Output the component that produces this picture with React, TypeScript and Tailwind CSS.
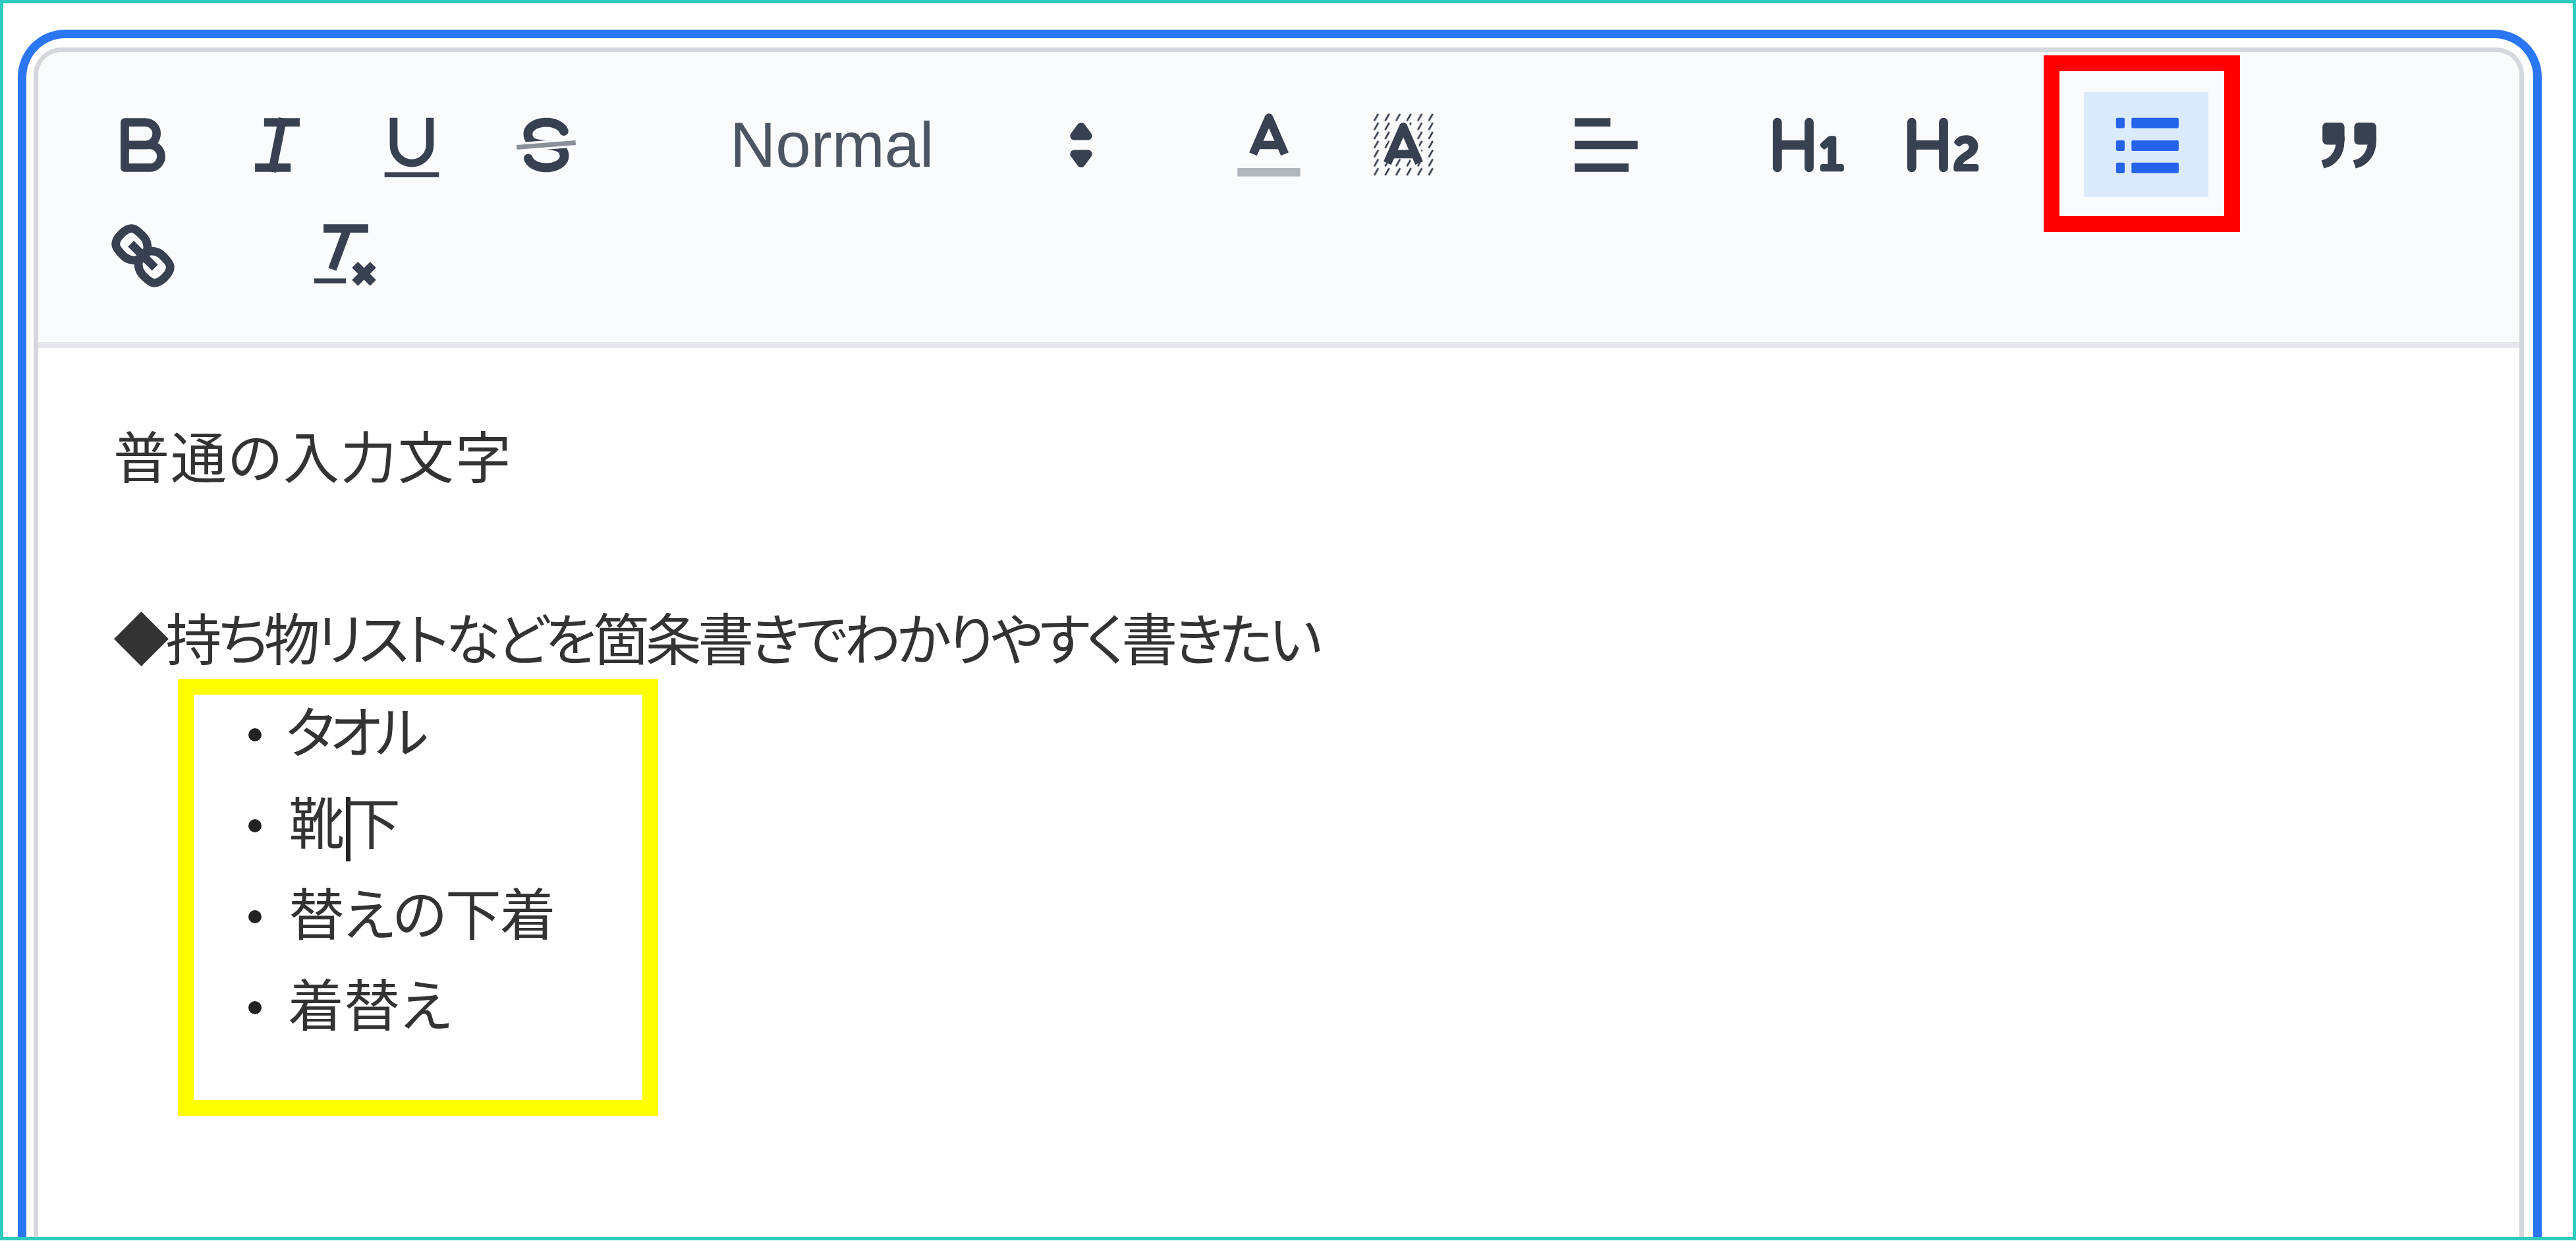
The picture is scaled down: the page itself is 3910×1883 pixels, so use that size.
import React from "react";

function Svg({ children, className = "" }: { children: React.ReactNode; className?: string }) {
  return (
    <svg
      viewBox="0 0 18 18"
      className={"w-[124px] h-[124px] fill-none stroke-current stroke-[1.85] [stroke-linecap:square] [stroke-linejoin:round] " + className}
    >
      {children}
    </svg>
  );
}

function Btn({ children, active = false }: { children: React.ReactNode; active?: boolean }) {
  return (
    <button
      className={
        "w-[189px] h-[159px] flex items-center justify-center " +
        (active ? "bg-[#dbeafe] text-[#2563eb]" : "text-[#374151]")
      }
    >
      {children}
    </button>
  );
}

function Group({ children }: { children: React.ReactNode }) {
  return <div className="flex gap-[15px]">{children}</div>;
}

const items = [
  { t: "タオル", c: "tracking-[-8px] -ml-[4px]" },
  { t: "靴下", c: "" },
  { t: "替えの下着", c: "tracking-[-2px]" },
  { t: "着替え", c: "-ml-[1px]" },
];

export default function App() {
  return (
    <div className="relative w-[3910px] h-[1882px] bg-white border-[5px] border-[#2ecbbd] overflow-hidden flex flex-col pl-[22px] pr-[47px] pt-[40px] [font-family:'Noto_Sans_CJK_JP',sans-serif]">
      <div className="flex-1 flex flex-col rounded-t-[72px] border-[13px] border-b-0 border-[#2b76f5] pl-[11px] pr-[14px] pt-[14px] bg-white min-h-0">
        <div className="flex-1 flex flex-col rounded-t-[42px] border-[7px] border-b-0 border-[#d4d7dc] overflow-hidden min-h-0">
          <div className="flex flex-wrap gap-x-[119px] gap-y-[9px] pl-[64px] pr-[20px] pt-[61px] pb-[52px] bg-[#fafbfd] border-b-[9px] border-[#e5e7eb]">
            <Group>
              <Btn>
                <Svg>
                  <path d="M5,4H9.5A2.5,2.5,0,0,1,12,6.5v0A2.5,2.5,0,0,1,9.5,9H5A0,0,0,0,1,5,9V4A0,0,0,0,1,5,4Z" />
                  <path d="M5,9h5.5A2.5,2.5,0,0,1,13,11.5v0A2.5,2.5,0,0,1,10.5,14H5a0,0,0,0,1,0,0V9A0,0,0,0,1,5,9Z" />
                </Svg>
              </Btn>
              <Btn>
                <Svg>
                  <line x1="7" x2="13" y1="4" y2="4" />
                  <line x1="5" x2="11" y1="14" y2="14" />
                  <line x1="8" x2="10" y1="14" y2="4" />
                </Svg>
              </Btn>
              <Btn>
                <Svg>
                  <path d="M5,3V9a4.012,4.012,0,0,0,4,4H9a4.012,4.012,0,0,0,4-4V3" className="[stroke-linecap:butt] stroke-[1.7]" />
                  <rect height="1.1" width="12" x="3" y="15" className="fill-current stroke-0" />
                </Svg>
              </Btn>
              <Btn>
                <Svg>
                  <path className="fill-current stroke-0" d="M9.007,8C6.542,7.791,6,7.519,6,6.5,6,5.792,7.283,5,9,5c1.571,0,2.765.679,2.969,1.309a1,1,0,0,0,1.9-.617C13.356,4.106,11.354,3,9,3,6.2,3,4,4.538,4,6.5a3.2,3.2,0,0,0,.5,1.843Z" />
                  <path className="fill-current stroke-0" d="M8.984,10C11.457,10.208,12,10.479,12,11.5c0,.708-1.283,1.5-3,1.5-1.571,0-2.765-.679-2.969-1.309a1,1,0,1,0-1.9.617C4.644,13.894,6.646,15,9,15c2.8,0,5-1.538,5-3.5a3.2,3.2,0,0,0-.5-1.843Z" />
                  <line x1="15.5" x2="2.5" y1="8.5" y2="9.5" className="stroke-[#8a9099] stroke-1 [stroke-linecap:butt]" />
                </Svg>
              </Btn>
            </Group>

            <div className="w-[670px] h-[159px] flex items-center justify-between pl-[66px] pr-[9px] text-[#4b5563]">
              <span className="text-[96px] leading-none [font-family:'Liberation_Sans',Arial,sans-serif]">Normal</span>
              <Svg className="text-[#374151]">
                <polygon points="7.5 11 9 13 10.5 11 7.5 11" className="fill-current" />
                <polygon points="7.5 7 9 5 10.5 7 7.5 7" className="fill-current" />
              </Svg>
            </div>

            <Group>
              <Btn>
                <Svg>
                  <line x1="3" x2="15" y1="15" y2="15" className="stroke-[#b2b6bd]" />
                  <polyline points="5.5 11 9 3 12.5 11" className="[stroke-linecap:butt]" />
                  <line x1="11.63" x2="6.38" y1="9" y2="9" className="[stroke-linecap:butt]" />
                </Svg>
              </Btn>
              <Btn>
                <Svg>
                  <defs>
                    <pattern id="hatch" width="2.4" height="2" patternUnits="userSpaceOnUse">
                      <path d="M0.2,1.7 L1.1,0.1" className="stroke-[0.4] [stroke-linecap:butt]" />
                    </pattern>
                  </defs>
                  <rect x="2.1" y="2.1" width="13.8" height="13.8" fill="url(#hatch)" className="stroke-0" />
                  <polyline points="5.5 13 9 5 12.5 13" className="stroke-[#fafbfd] stroke-[3] [stroke-linecap:butt]" />
                  <polyline points="5.5 13 9 5 12.5 13" className="[stroke-linecap:butt]" />
                  <line x1="11.63" x2="6.38" y1="11" y2="11" className="[stroke-linecap:butt]" />
                </Svg>
              </Btn>
            </Group>

            <Group>
              <Btn>
                <Svg>
                  <line x1="3" x2="15" y1="9" y2="9" />
                  <line x1="3" x2="13" y1="14" y2="14" />
                  <line x1="3" x2="9" y1="4" y2="4" />
                </Svg>
              </Btn>
            </Group>

            <Group>
              <Btn>
                <Svg>
                  <path className="fill-current stroke-0" d="M10,4V14a1,1,0,0,1-2,0V10H3v4a1,1,0,0,1-2,0V4A1,1,0,0,1,3,4V8H8V4a1,1,0,0,1,2,0Zm6.06787,9.209H14.98975V7.59863a.54085.54085,0,0,0-.605-.60547h-.62744a1.01119,1.01119,0,0,0-.748.29688L11.645,8.56641a.5435.5435,0,0,0-.022.8584l.28613.30762a.53861.53861,0,0,0,.84717.0332l.09912-.08789a1.2137,1.2137,0,0,0,.2417-.35254h.02246s-.01123.30859-.01123.60547V13.209H12.041a.54085.54085,0,0,0-.605.60547v.43945a.54085.54085,0,0,0,.605.60547h4.02686a.54085.54085,0,0,0,.605-.60547v-.43945A.54085.54085,0,0,0,16.06787,13.209Z" />
                </Svg>
              </Btn>
              <Btn>
                <Svg>
                  <path className="fill-current stroke-0" d="M16.73975,13.81445v.43945a.54085.54085,0,0,1-.605.60547H11.855a.58392.58392,0,0,1-.64893-.60547V14.0127c0-2.90527,3.39941-3.42187,3.39941-4.55469a.77675.77675,0,0,0-.84717-.78125,1.17684,1.17684,0,0,0-.83594.38477c-.2749.26367-.561.374-.85791.13184l-.4292-.34082c-.30811-.24219-.38525-.51758-.1543-.81445a2.97155,2.97155,0,0,1,2.45361-1.17676,2.45393,2.45393,0,0,1,2.68408,2.40918c0,2.45312-3.1792,2.92676-3.27832,3.93848h2.79443A.54085.54085,0,0,1,16.73975,13.81445ZM9,3A.99974.99974,0,0,0,8,4V8H3V4A1,1,0,0,0,1,4V14a1,1,0,0,0,2,0V10H8v4a1,1,0,0,0,2,0V4A.99974.99974,0,0,0,9,3Z" />
                </Svg>
              </Btn>
            </Group>

            <Group>
              <Btn active>
                <Svg>
                  <rect x="5.7" y="3" width="10.4" height="2.3" rx="0.3" className="fill-current stroke-0" />
                  <rect x="5.7" y="8" width="10.4" height="2.3" rx="0.3" className="fill-current stroke-0" />
                  <rect x="5.7" y="12.9" width="10.4" height="2.3" rx="0.3" className="fill-current stroke-0" />
                  <rect x="2.3" y="3" width="1.9" height="2.3" rx="0.3" className="fill-current stroke-0" />
                  <rect x="2.3" y="8" width="1.9" height="2.3" rx="0.3" className="fill-current stroke-0" />
                  <rect x="2.3" y="12.9" width="1.9" height="2.3" rx="0.3" className="fill-current stroke-0" />
                </Svg>
              </Btn>
            </Group>

            <Group>
              <Btn>
                <Svg className="[stroke-linecap:round]">
                  <rect height="3" width="3" x="4" y="5" className="fill-current" />
                  <rect height="3" width="3" x="11" y="5" className="fill-current" />
                  <path d="M7,8c0,4.031-3,5-3,5" />
                  <path d="M14,8c0,4.031-3,5-3,5" />
                </Svg>
              </Btn>
            </Group>

            <Group>
              <Btn>
                <Svg className="[stroke-linecap:round]">
                  <line x1="7" x2="11" y1="7" y2="11" />
                  <path d="M8.9,4.577a3.476,3.476,0,0,1,.36,4.679A3.476,3.476,0,0,1,4.577,8.9C3.185,7.5,2.035,6.4,4.217,4.217S7.5,3.185,8.9,4.577Z" />
                  <path d="M13.423,9.1a3.476,3.476,0,0,0-4.679-.36,3.476,3.476,0,0,0,.36,4.679c1.392,1.392,2.5,2.542,4.679.36S14.815,10.5,13.423,9.1Z" />
                </Svg>
              </Btn>
            </Group>

            <Group>
              <Btn>
                <Svg>
                  <line x1="5" x2="13" y1="3" y2="3" />
                  <line x1="6" x2="9.35" y1="12" y2="3" className="[stroke-linecap:butt]" />
                  <line x1="11" x2="15" y1="11" y2="15" className="[stroke-linecap:butt]" />
                  <line x1="15" x2="11" y1="11" y2="15" className="[stroke-linecap:butt]" />
                  <rect height="1.1" width="7" x="2" y="14" className="fill-current stroke-0" />
                </Svg>
              </Btn>
            </Group>
          </div>

          <div className="flex-1 pl-[114px] pt-[92px] text-[85px] leading-[138px] text-[#333333] [font-feature-settings:'palt']">
            <p className="tracking-[2px]">普通の入力文字</p>
            <p className="h-[138px]"></p>
            <p className="tracking-[-5.4px]">◆持ち物リストなどを箇条書きでわかりやすく書きたい</p>
            <ul className="mt-[3px]">
              {items.map(({ t, c }) => (
                <li key={t} className="flex h-[138px]">
                  <span className="w-[20px] h-[20px] rounded-full bg-[#222222] ml-[205px] mt-[68px] mr-[41px] shrink-0"></span>
                  {t === "靴下" ? (
                    <span>
                      靴
                      <span className="inline-block w-[7px] h-[98px] bg-[#222222] align-middle ml-[2px] -mr-[9px]"></span>
                      下
                    </span>
                  ) : (
                    <span className={c}>{t}</span>
                  )}
                </li>
              ))}
            </ul>
          </div>
        </div>
      </div>

      <div className="absolute left-[3097px] top-[79px] w-[298px] h-[268px] border-[24px] border-[#ff0000]"></div>
      <div className="absolute left-[265px] top-[1025px] w-[729px] h-[663px] border-[24px] border-[#ffff00]"></div>
    </div>
  );
}
